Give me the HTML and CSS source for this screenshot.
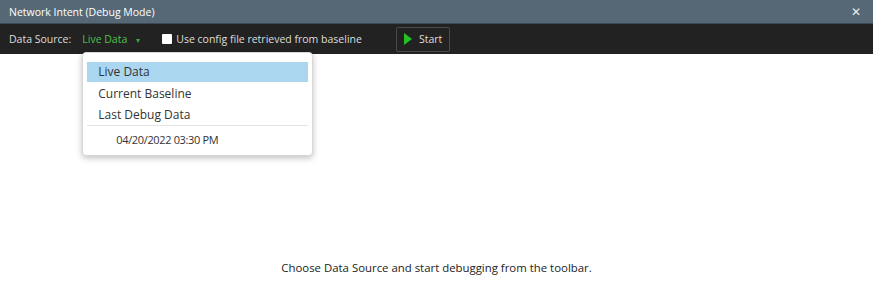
FILE: index.html
```html
<!DOCTYPE html>
<html lang="en">
<head>
    <meta charset="UTF-8">
    <title>Network Intent (Debug Mode)</title>
    <link rel="stylesheet" href="styles.css">
</head>
<body>
    <div class="window">
        <header class="titlebar">
            <span class="title">Network Intent (Debug Mode)</span>
            <span class="close">&#x2715;</span>
        </header>

        <div class="toolbar">
            <span class="label">Data Source:</span>
            <div class="source">
                <span class="source-value">Live Data</span>
                <span class="caret">&#9662;</span>
                <ul class="menu">
                    <li class="selected">Live Data</li>
                    <li>Current Baseline</li>
                    <li>Last Debug Data</li>
                    <li class="sep"></li>
                    <li class="sub">04/20/2022 03:30 PM</li>
                </ul>
            </div>
            <label class="check"><span class="box"></span>Use config file retrieved from baseline</label>
            <button class="start"><span class="play"></span>Start</button>
        </div>

        <main class="content">
            <p>Choose Data Source and start debugging from the toolbar.</p>
        </main>
    </div>
</body>
</html>
```

FILE: styles.css
```css
body {
    margin: 0;
    font-family: "Open Sans", Arial, sans-serif;
    font-size: 11px;
    color: #222;
    background: #fff;
}
.window {
    display: flex;
    flex-direction: column;
    height: 286px;
}
.titlebar {
    height: 23px;
    background-color: #566875;
    border-bottom: 1px solid #3d4a53;
    color: #fff;
    font-size: 10.5px;
    display: flex;
    align-items: center;
    justify-content: space-between;
    padding: 0 12px 0 9px;
}
.close {
    font-size: 12px;
    color: #e8ecef;
}
.toolbar {
    height: 30px;
    background-color: #222;
    color: #ddd;
    font-size: 10.5px;
    display: flex;
    align-items: center;
    padding-left: 9px;
}
.label {
    margin-right: 11px;
}
.source {
    position: relative;
    display: flex;
    align-items: center;
    color: #4cc14c;
}
.caret {
    font-size: 8px;
    margin-left: 9px;
    color: #3da63d;
}
.menu {
    position: absolute;
    top: 20px;
    left: 0;
    width: 221px;
    margin: 0;
    padding: 9px 4px 5px 4px;
    list-style: none;
    background: #fff;
    border: 1px solid #d8d8d8;
    border-radius: 4px;
    box-shadow: 0 2px 6px rgba(0,0,0,0.25);
    color: #333;
    font-size: 12px;
    z-index: 2;
}
.menu li {
    height: 21px;
    line-height: 21px;
    padding-left: 11px;
}
.menu li.selected {
    height: 20px;
    line-height: 20px;
    margin-bottom: 1px;
    background-color: #aad6f0;
}
.menu li.sep {
    height: 0;
    margin: 0 0 3px;
    border-top: 1px solid #e4e4e4;
}
.menu li.sub {
    padding-left: 29px;
    font-size: 11px;
    letter-spacing: -0.35px;
}
.check {
    display: flex;
    align-items: center;
    margin-left: 22px;
}
.box {
    width: 10px;
    height: 10px;
    background: #fff;
    border-radius: 1px;
    margin-right: 4px;
}
.start {
    margin-left: 34px;
    height: 25px;
    display: flex;
    align-items: center;
    background: #222;
    color: #ddd;
    border: 1px solid #4a4a4a;
    border-radius: 2px;
    font-family: inherit;
    font-size: 10.5px;
    padding: 0 7px 0 7px;
}
.play {
    width: 0;
    height: 0;
    border-left: 8px solid #22c322;
    border-top: 6px solid transparent;
    border-bottom: 6px solid transparent;
    margin-right: 7px;
}
.content {
    flex: 1;
    display: flex;
    align-items: flex-end;
    justify-content: center;
}
.content p {
    margin: 0 0 11px;
    font-size: 11.4px;
}
```
